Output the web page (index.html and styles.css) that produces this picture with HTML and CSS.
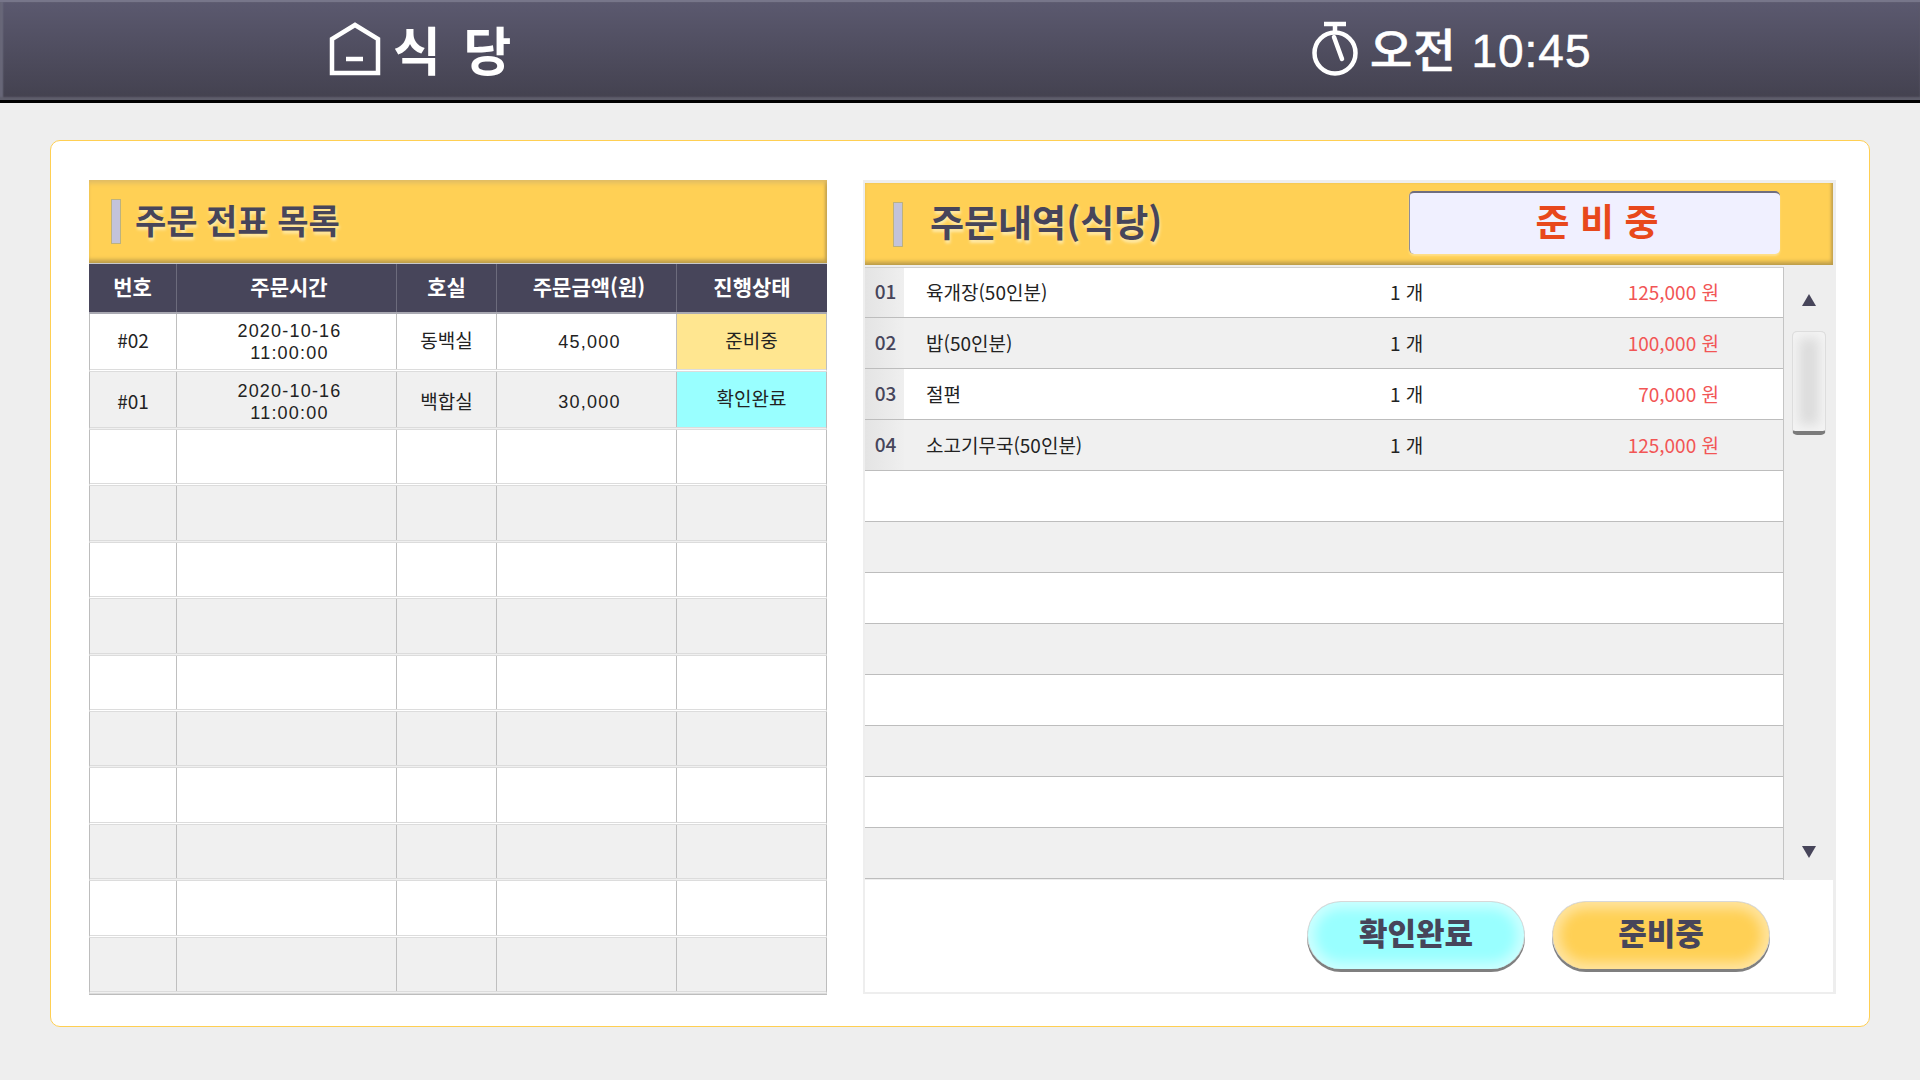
FILE: index.html
```html
<!DOCTYPE html>
<html lang="ko">
<head>
    <meta charset="utf-8">
    <title>식당</title>
    <link rel="stylesheet" href="styles.css">
</head>
<body>
    <header class="topbar">
        <div class="place">
            <svg class="home-icon" width="52" height="54" viewBox="0 0 52 54" fill="none" stroke="#fff" stroke-width="4.5">
                <path d="M3 51V17L26 3L49 17V51Z"/>
                <path d="M17 37H34"/>
            </svg>
            <span class="place-name">식 당</span>
        </div>
        <div class="clock">
            <svg class="clock-icon" width="46" height="56" viewBox="0 0 46 56" fill="none" stroke="#fff" stroke-width="4.5">
                <circle cx="23" cy="32" r="20.5"/>
                <path d="M12 3H34M23 3V11"/>
                <path d="M22 16L30 38" stroke-linecap="round"/>
            </svg>
            <span class="clock-time">오전 10:45</span>
        </div>
    </header>

    <main class="page">
        <div class="card">
            <section class="orders">
                <div class="title-bar">
                    <span class="title-mark"></span>
                    <h2 class="title">주문 전표 목록</h2>
                </div>
                <div class="order-head">
                    <div>번호</div><div class="nudge">주문시간</div><div>호실</div><div class="nudge">주문금액(원)</div><div>진행상태</div>
                </div>
                <div class="order-row order-filled">
                    <div>#02</div><div class="nudge digits">2020-10-16<br>11:00:00</div><div>동백실</div><div class="nudge digits">45,000</div><div class="state state-ready">준비중</div>
                </div>
                <div class="order-row order-filled order-second">
                    <div>#01</div><div class="nudge digits">2020-10-16<br>11:00:00</div><div>백합실</div><div class="nudge digits">30,000</div><div class="state state-done">확인완료</div>
                </div>
                <div class="order-row"><div></div><div></div><div></div><div></div><div></div></div>
                <div class="order-row"><div></div><div></div><div></div><div></div><div></div></div>
                <div class="order-row"><div></div><div></div><div></div><div></div><div></div></div>
                <div class="order-row"><div></div><div></div><div></div><div></div><div></div></div>
                <div class="order-row"><div></div><div></div><div></div><div></div><div></div></div>
                <div class="order-row"><div></div><div></div><div></div><div></div><div></div></div>
                <div class="order-row"><div></div><div></div><div></div><div></div><div></div></div>
                <div class="order-row"><div></div><div></div><div></div><div></div><div></div></div>
                <div class="order-row"><div></div><div></div><div></div><div></div><div></div></div>
                <div class="order-row"><div></div><div></div><div></div><div></div><div></div></div>
            </section>

            <section class="detail">
                <div class="title-bar detail-bar">
                    <span class="title-mark"></span>
                    <h2 class="title detail-title">주문내역(식당)</h2>
                    <div class="now-state">준 비 중</div>
                </div>
                <div class="detail-body">
                    <div class="items">
                        <div class="item"><span class="item-no">01</span><span class="item-name">육개장(50인분)</span><span class="item-qty">1 개</span><span class="item-price">125,000 원</span></div>
                        <div class="item"><span class="item-no">02</span><span class="item-name">밥(50인분)</span><span class="item-qty">1 개</span><span class="item-price">100,000 원</span></div>
                        <div class="item"><span class="item-no">03</span><span class="item-name">절편</span><span class="item-qty">1 개</span><span class="item-price">70,000 원</span></div>
                        <div class="item"><span class="item-no">04</span><span class="item-name">소고기무국(50인분)</span><span class="item-qty">1 개</span><span class="item-price">125,000 원</span></div>
                        <div class="item"></div>
                        <div class="item"></div>
                        <div class="item"></div>
                        <div class="item"></div>
                        <div class="item"></div>
                        <div class="item"></div>
                        <div class="item"></div>
                        <div class="item"></div>
                    </div>
                    <div class="scroll">
                        <span class="arrow-up"></span>
                        <span class="thumb"></span>
                        <span class="arrow-down"></span>
                    </div>
                </div>
                <div class="actions">
                    <button class="btn btn-done">확인완료</button>
                    <button class="btn btn-ready">준비중</button>
                </div>
            </section>
        </div>
    </main>
</body>
</html>
```

FILE: styles.css
```css
*{
    box-sizing: border-box;
}
body{
    margin: 0;
    padding: 0;
    background-color: #eeeeee;
    font-family: "Noto Sans CJK KR", "Noto Sans", sans-serif;
    color: #222222;
}

/* top bar */
.topbar{
    display: flex;
    align-items: center;
    height: 103px;
    padding-left: 329px;
    padding-bottom: 4px;
    background: linear-gradient(#5b596f, #43414f);
    border-top: 2px solid #77768a;
    border-bottom: 3px solid #000000;
    box-shadow: inset 0 -3px 2px #5f5e6c, inset 3px 0 2px #6b6a7c;
    color: #ffffff;
}
.place{
    display: flex;
    align-items: center;
    width: 983px;
    gap: 12px;
}
.place-name{
    font-size: 52px;
    font-weight: 700;
    line-height: 60px;
    word-spacing: 8px;
}
.clock{
    display: flex;
    align-items: center;
    gap: 12px;
}
.clock-time{
    padding-top: 4px;
    font-family: "Liberation Sans", "Noto Sans CJK KR", sans-serif;
    font-size: 46px;
    font-weight: 500;
    line-height: 60px;
    letter-spacing: 1px;
    word-spacing: 1px;
    -webkit-text-stroke: 0.6px #ffffff;
}

/* white card */
.page{
    padding: 37px 50px 0;
}
.card{
    display: flex;
    align-items: flex-start;
    gap: 36px;
    height: 887px;
    padding: 39px 33px 0 38px;
    background-color: #ffffff;
    border: 1px solid #ffcf52;
    border-radius: 10px;
}

/* yellow title bars */
.title-bar{
    display: flex;
    align-items: center;
    height: 83px;
    padding-left: 22px;
    background-color: #ffd055;
    box-shadow: inset 0 6px 5px -3px #dfbb66, inset 0 -5px 4px -2px #b99a4a, inset -3px 0 3px -1px #c5a450;
}
.title-mark{
    width: 10px;
    height: 45px;
    margin-right: 14px;
    background-color: #c3c3da;
    border: 1px solid #bdb27e;
}
.title{
    margin: 0;
    padding-bottom: 5px;
    font-size: 34px;
    font-weight: 700;
    word-spacing: -1px;
    color: #47455a;
    text-shadow: 1px 3px 3px #ffeaa8;
}

/* order list */
.orders{
    width: 738px;
    border-bottom: 1px solid #bdbdbd;
}
.order-head,
.order-row{
    display: grid;
    grid-template-columns: 87px 220px 100px 180px 1fr;
    text-align: center;
}
.order-head{
    grid-template-columns: 88px 220px 100px 180px 1fr;
    height: 51px;
    border-top: 1px solid #c9c9c9;
    border-bottom: 2px solid #a9a9b2;
    background-color: #47455a;
    color: #ffffff;
    font-size: 21px;
    font-weight: 700;
}
.order-head div{
    display: flex;
    align-items: center;
    justify-content: center;
    padding-bottom: 5px;
    border-right: 1px solid #6c6b7c;
}
.order-head div:last-child{
    border-right: none;
}
.order-head .nudge{
    padding-left: 5px;
}
.order-row{
    height: 56.4px;
    border-left: 1px solid #bdbdbd;
    border-right: 1px solid #bdbdbd;
    border-bottom: 3px double #dcdcdc;
    background-color: #ffffff;
    font-size: 19px;
    line-height: 22px;
}
.order-row:nth-child(even){
    background-color: #f0f0f0;
}
.order-filled{
    height: 58px;
}
.order-row div{
    display: flex;
    align-items: center;
    justify-content: center;
    padding-bottom: 3px;
    border-right: 1px solid #bfbfbf;
}
.order-second div{
    padding-bottom: 0;
    padding-top: 2px;
}
.order-row div:last-child{
    border-right: none;
}
.order-row .nudge{
    padding-left: 6px;
}
.order-row .digits{
    padding-bottom: 0;
    font-family: "Liberation Sans", sans-serif;
    font-size: 18px;
    letter-spacing: 1.2px;
}
.order-second .digits{
    padding-top: 4px;
}
.state-ready{
    background-color: #ffe690;
}
.order-row .state-done{
    background-color: #99ffff;
    padding-top: 0;
    padding-bottom: 4px;
}

/* order detail */
.detail{
    width: 973px;
    height: 814px;
    border: solid #eeeeee;
    border-width: 3px 3px 2px 2px;
    background-color: #ffffff;
}
.detail-bar{
    height: 82px;
    padding-left: 28px;
    box-shadow: inset 0 -5px 4px -2px #b99a4a, inset -3px 0 3px -1px #c5a450;
}
.detail-title{
    padding-bottom: 7px;
    font-size: 37px;
    margin-left: 13px;
    white-space: nowrap;
}
.now-state{
    width: 371px;
    height: 63px;
    margin-top: -3px;
    margin-left: auto;
    margin-right: 53px;
    padding-left: 4px;
    background-color: #f0f0ff;
    border-top: 2px solid #6f6e80;
    border-left: 1px solid #8d8c9a;
    border-radius: 5px;
    color: #e8481c;
    font-size: 37px;
    font-weight: 700;
    line-height: 54px;
    text-align: center;
    box-shadow: 0 2px 2px #ffe08c;
}
.detail-body{
    display: flex;
    height: 615px;
    padding-top: 2px;
    background-color: #eeeeee;
}
.items{
    width: 919px;
    border-right: 1px solid #c4c4c4;
}
.item{
    display: flex;
    align-items: center;
    height: 51px;
    background-color: #ffffff;
    border-bottom: 1px solid #bdbdbd;
    font-size: 19px;
}
.item:nth-child(even){
    background-color: #f0f0f0;
}
.item:first-child{
    border-top: 1px solid #d0d0d0;
}
.item-no{
    display: flex;
    align-items: center;
    justify-content: center;
    width: 39px;
    height: 100%;
    padding: 0 0 4px 2px;
    background: linear-gradient(to right, #e4e4e4, #efefef);
    color: #47455a;
    font-size: 19px;
    font-weight: 500;
}
.item-name{
    width: 486px;
    padding-left: 22px;
    padding-bottom: 2px;
}
.item-qty{
    width: 62px;
    padding-bottom: 2px;
}
.item-price{
    width: 267px;
    padding-bottom: 2px;
    text-align: right;
    color: #f25555;
}
.scroll{
    display: flex;
    flex-direction: column;
    align-items: center;
    width: 49px;
    padding: 27px 0 22px;
}
.arrow-up{
    width: 0;
    height: 0;
    border-left: 7px solid transparent;
    border-right: 7px solid transparent;
    border-bottom: 12px solid #47455a;
}
.arrow-down{
    width: 0;
    height: 0;
    margin-top: auto;
    border-left: 7px solid transparent;
    border-right: 7px solid transparent;
    border-top: 12px solid #47455a;
}
.thumb{
    width: 34px;
    height: 104px;
    margin-top: 25px;
    background-color: #dcdcdc;
    border: 1px solid #dddddd;
    border-bottom: 4px solid #7b7b7b;
    border-radius: 5px;
    box-shadow: inset 0 0 12px 6px #f4f4f4;
}
.actions{
    display: flex;
    justify-content: flex-end;
    gap: 27px;
    padding: 21px 63px 0 0;
}
.btn{
    width: 218px;
    height: 68px;
    border: 1px solid #d8d8d8;
    border-bottom: none;
    border-radius: 36px;
    color: #47455a;
    font-family: inherit;
    font-size: 31px;
    font-weight: 900;
    padding: 0 0 8px;
}
.btn-done{
    background-color: #99ffff;
    box-shadow: 0 3px 0 #7f7f7f, inset 0 0 12px 7px #ccffff;
}
.btn-ready{
    background-color: #ffd055;
    box-shadow: 0 3px 0 #7f7f7f, inset 0 0 12px 7px #ffe49f;
}
```
